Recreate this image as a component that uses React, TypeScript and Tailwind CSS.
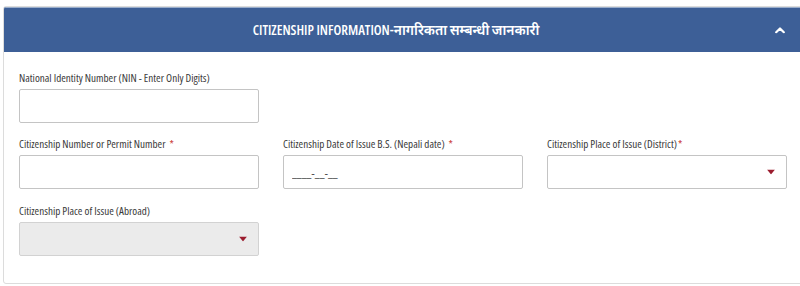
import React from "react";

const labelCls =
  "block h-[14px] leading-[14px] mb-[4px] text-[11.1px] text-[#3a3a3a] whitespace-nowrap [font-stretch:75%]";

const Req = () => <span className="text-[#c9302c] ml-[4px]">*</span>;

const Caret = () => (
  <svg
    className="absolute right-[11px] top-1/2 -translate-y-1/2"
    width="8"
    height="5"
    viewBox="0 0 8 5"
  >
    <path d="M0 0h8L4 5z" fill="#9b1c2e" />
  </svg>
);

const TextBox: React.FC<{ placeholder?: string }> = ({ placeholder }) => (
  <input
    type="text"
    placeholder={placeholder}
    className="block w-full h-[34px] border border-[#c4c4c4] rounded-[2px] bg-white px-[8px] text-[11px] text-[#333] placeholder:text-[#333] outline-none"
  />
);

const SelectBox: React.FC<{ disabled?: boolean }> = ({ disabled }) => (
  <div
    className={`relative w-full h-[34px] border rounded-[2px] ${
      disabled ? "bg-[#ebebeb] border-[#d2d2d2]" : "bg-white border-[#c4c4c4]"
    }`}
  >
    <Caret />
  </div>
);

export default function App() {
  return (
    <div
      className="w-[800px] h-[286px] overflow-hidden bg-white pl-[3px] pt-[6px]"
      style={{ fontFamily: '"Open Sans", "Liberation Sans", "Noto Sans", sans-serif' }}
    >
      <div className="w-[804px] border border-[#dcdcdc] rounded-[3px] overflow-hidden">
        <div className="relative h-[45px] bg-[#3d5f97] border-t border-[#9aaecc] flex items-center justify-center pr-[18px]">
          <span className="text-white text-[13.8px] font-semibold [font-stretch:75%]">
            CITIZENSHIP INFORMATION-नागरिकता सम्बन्धी जानकारी
          </span>
          <svg
            className="absolute right-[21px] top-1/2 -translate-y-1/2"
            width="10"
            height="7"
            viewBox="0 0 10 7"
          >
            <path
              d="M1.2 5.8L5 2l3.8 3.8"
              fill="none"
              stroke="#fff"
              strokeWidth="2.2"
              strokeLinecap="round"
              strokeLinejoin="round"
            />
          </svg>
        </div>

        <div className="pl-[15px] pt-[19px] pb-[27px]">
          <div className="grid grid-cols-[240px_240px_240px] gap-x-[24px] gap-y-[14px]">
            <div>
              <label className={labelCls}>
                National Identity Number (NIN - Enter Only Digits)
              </label>
              <TextBox />
            </div>
            <div />
            <div />

            <div>
              <label className={labelCls}>
                Citizenship Number or Permit Number
                <Req />
              </label>
              <TextBox />
            </div>
            <div>
              <label className={labelCls}>
                Citizenship Date of Issue B.S. (Nepali date)
                <Req />
              </label>
              <TextBox placeholder="____-__-__" />
            </div>
            <div>
              <label className={labelCls}>
                Citizenship Place of Issue (District)
                <span className="text-[#c9302c] ml-[1px]">*</span>
              </label>
              <SelectBox />
            </div>

            <div className="pt-[1px]">
              <label className={labelCls}>
                Citizenship Place of Issue (Abroad)
              </label>
              <SelectBox disabled />
            </div>
          </div>
        </div>
      </div>
    </div>
  );
}
